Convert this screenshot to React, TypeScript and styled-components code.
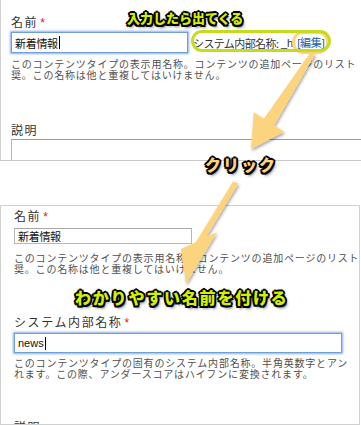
import React from "react";
import styled, { createGlobalStyle, css } from "styled-components";

const GlobalStyle = createGlobalStyle`
  html, body { margin: 0; padding: 0; background: #fff; }
  body { font-family: "Noto Sans CJK JP", "Noto Sans", sans-serif; }
`;

const Canvas = styled.div`
  position: relative;
  width: 361px;
  height: 425px;
  overflow: hidden;
  background: #fff;
  font-family: "Noto Sans CJK JP", "Noto Sans", sans-serif;
`;

const Shot = styled.section<{ $variant: "top" | "bottom" }>`
  box-sizing: border-box;
  overflow: hidden;
  background: #fff;
  ${(p) =>
    p.$variant === "top"
      ? css`
          width: 361px;
          height: 161px;
          border-left: 1px solid #d2d2d2;
          border-bottom: 1px solid #c8c8c8;
          padding: 15px 0 0 10px;
        `
      : css`
          margin-top: 44px;
          width: 360px;
          height: 220px;
          border: 1px solid #d0d0d0;
          padding: 3px 0 0 13px;
        `}
`;

const Label = styled.div<{ $mt?: number }>`
  margin-top: ${(p) => p.$mt ?? 0}px;
  font-size: 12px;
  line-height: 14px;
  letter-spacing: 1.6px;
  color: #333;
  white-space: nowrap;
`;

const Required = styled.span`
  color: #e8102c;
  font-family: "Liberation Sans", Arial, sans-serif;
  font-size: 12px;
  margin-left: 2px;
`;

const Row = styled.div`
  display: flex;
  align-items: flex-start;
  margin-top: 2px;
`;

const TextBox = styled.div<{ $w: number; $h: number; $focused?: boolean; $mt?: number; $latin?: boolean }>`
  box-sizing: border-box;
  flex: none;
  width: ${(p) => p.$w}px;
  height: ${(p) => p.$h}px;
  margin-top: ${(p) => p.$mt ?? 0}px;
  padding-left: 3px;
  display: flex;
  align-items: center;
  background: #fff;
  color: #111;
  white-space: nowrap;
  font-size: 11px;
  letter-spacing: -0.3px;
  ${(p) =>
    p.$latin &&
    css`
      font-family: "Liberation Sans", Arial, sans-serif;
      letter-spacing: 0;
    `}
  ${(p) =>
    p.$focused
      ? css`
          border: 1px solid #6e9fd6;
          box-shadow: 0 0 2px 1px rgba(96, 150, 220, 0.75);
        `
      : css`
          border: 1px solid #b8b8b8;
          border-top-color: #a8a8a8;
        `}
`;

const Caret = styled.span`
  display: inline-block;
  width: 1px;
  height: 13px;
  margin-left: 1px;
  background: #000;
`;

const SysName = styled.div`
  position: relative;
  display: flex;
  align-items: center;
  height: 21px;
  margin-left: 5px;
  font-size: 11px;
  line-height: 14px;
  color: #333;
  white-space: nowrap;
`;

const Tight = styled.span`
  letter-spacing: -0.6px;
`;

const Latin = styled.span`
  font-family: "Liberation Sans", Arial, sans-serif;
  font-size: 11px;
  margin: 0 4px 0 2px;
`;

const Balloon = styled.span`
  position: absolute;
  top: -2px;
  bottom: 1px;
  left: -2px;
  right: -6px;
  border: 3px solid #c4dc1c;
  border-radius: 12px;
  pointer-events: none;
`;

const EditLink = styled.span`
  position: relative;
  color: #1d5ea6;
  font-family: "Liberation Sans", "Noto Sans CJK JP", sans-serif;
  letter-spacing: -0.2px;
  &::after {
    content: "";
    position: absolute;
    top: -5px;
    bottom: -4px;
    left: -5px;
    right: -4px;
    border: 3px solid #fcd47e;
    border-radius: 11px;
  }
`;

const Help = styled.p<{ $mt: number }>`
  margin: ${(p) => p.$mt}px 0 0;
  font-size: 10px;
  line-height: 11px;
  letter-spacing: 0.8px;
  color: #505050;
  white-space: nowrap;
`;

const TextArea = styled.div`
  box-sizing: border-box;
  margin-top: 2px;
  width: 400px;
  height: 40px;
  border: 1px solid #b8b8b8;
  border-top-color: #9a9a9a;
  background: #fff;
`;

const Callout = styled.span<{ $tone: "lime" | "orange"; $size: number; $spacing: number; $x: number; $y: number }>`
  position: absolute;
  left: ${(p) => p.$x}px;
  top: ${(p) => p.$y}px;
  z-index: 3;
  font-family: "Noto Sans CJK JP", sans-serif;
  font-weight: 900;
  font-size: ${(p) => p.$size}px;
  line-height: ${(p) => p.$size}px;
  letter-spacing: ${(p) => p.$spacing}px;
  white-space: nowrap;
  color: ${(p) => (p.$tone === "lime" ? "#d2f000" : "#fdd27c")};
  text-shadow: -2px 0 #000, 2px 0 #000, 0 -2px #000, 0 2px #000,
    -1.5px -1.5px #000, 1.5px -1.5px #000, -1.5px 1.5px #000, 1.5px 1.5px #000,
    2px 3px 3px rgba(0, 0, 0, 0.55);
`;

const ArrowLayer = styled.svg`
  position: absolute;
  left: 0;
  top: 0;
  z-index: 2;
  pointer-events: none;
`;

export default function App() {
  return (
    <>
      <GlobalStyle />
      <Canvas>
        <Shot $variant="top">
          <Label>
            名前<Required>*</Required>
          </Label>
          <Row>
            <TextBox $w={177} $h={21} $focused>
              新着情報
              <Caret />
            </TextBox>
            <SysName>
              <Tight>システム内部名称</Tight>:<Latin>_h</Latin>
              <EditLink>[編集]</EditLink>
              <Balloon />
            </SysName>
          </Row>
          <Help $mt={5}>
            このコンテンツタイプの表示用名称。コンテンツの追加ページのリスト
            <br />
            奨。この名称は他と重複してはいけません。
          </Help>
          <Label $mt={43}>説明</Label>
          <TextArea />
        </Shot>

        <Shot $variant="bottom">
          <Label>
            名前<Required>*</Required>
          </Label>
          <TextBox $w={178} $h={16} $mt={4}>
            新着情報
          </TextBox>
          <Help $mt={8}>
            このコンテンツタイプの表示用名称。コンテンツの追加ページのリスト
            <br />
            奨。この名称は他と重複してはいけません。
          </Help>
          <Label $mt={41}>
            システム内部名称<Required>*</Required>
          </Label>
          <TextBox $w={328} $h={20} $mt={3} $focused $latin>
            news
            <Caret />
          </TextBox>
          <Help $mt={4}>
            このコンテンツタイプの固有のシステム内部名称。半角英数字とアン
            <br />
            れます。この際、アンダースコアはハイフンに変換されます。
          </Help>
          <Label $mt={41}>説明</Label>
        </Shot>

        <ArrowLayer width="361" height="425" viewBox="0 0 361 425">
          <defs>
            <filter id="arrowShadow" x="-20%" y="-20%" width="140%" height="140%">
              <feDropShadow dx="1" dy="2" stdDeviation="1.6" floodColor="#000" floodOpacity="0.35" />
            </filter>
          </defs>
          <g fill="#fdd47e" filter="url(#arrowShadow)">
            <polygon points="315.1,54.3 274.1,125.2 284.2,131.7 251,149 253.8,112.3 263.9,118.8 310.9,51.7" />
            <polygon points="233,181.5 196,242 181,249 186,284 217,232 206,237 238.5,183.5" />
          </g>
        </ArrowLayer>

        <Callout $tone="lime" $size={13} $spacing={0} $x={127} $y={11}>
          入力したら出てくる
        </Callout>
        <Callout $tone="orange" $size={16} $spacing={2} $x={205} $y={156}>
          クリック
        </Callout>
        <Callout $tone="lime" $size={16} $spacing={1.8} $x={75} $y={289}>
          わかりやすい名前を付ける
        </Callout>
      </Canvas>
    </>
  );
}
